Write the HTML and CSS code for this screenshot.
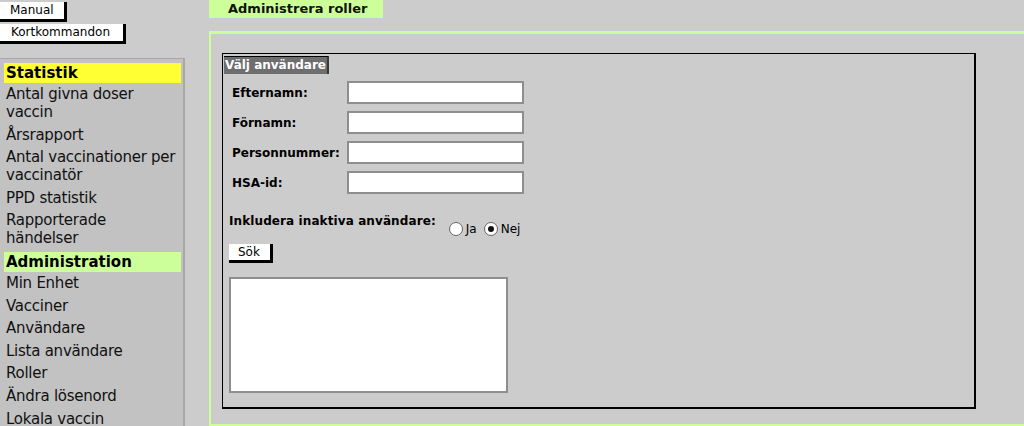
FILE: index.html
```html
<!DOCTYPE html>
<html lang="sv">
<head>
    <meta charset="UTF-8">
    <title>Administrera roller</title>
    <link rel="stylesheet" href="styles.css">
</head>
<body>
    <div class="sidebar">
        <div class="toplinks">
            <a class="btn" href="#">Manual</a>
            <a class="btn wide" href="#">Kortkommandon</a>
        </div>

        <!-- Meny -->
        <div class="menu">
            <div class="menu-head stat">Statistik</div>
            <a class="menu-item" href="#">Antal givna doser vaccin</a>
            <a class="menu-item" href="#">Årsrapport</a>
            <a class="menu-item" href="#">Antal vaccinationer per vaccinatör</a>
            <a class="menu-item" href="#">PPD statistik</a>
            <a class="menu-item" href="#">Rapporterade händelser</a>
            <div class="menu-head admin">Administration</div>
            <a class="menu-item" href="#">Min Enhet</a>
            <a class="menu-item" href="#">Vacciner</a>
            <a class="menu-item" href="#">Användare</a>
            <a class="menu-item" href="#">Lista användare</a>
            <a class="menu-item" href="#">Roller</a>
            <a class="menu-item" href="#">Ändra lösenord</a>
            <a class="menu-item" href="#">Lokala vaccin</a>
        </div>
    </div>

    <div class="main">
        <div class="tab">Administrera roller</div>
        <div class="content">
            <div class="box">
                <div class="legend">Välj användare</div>
                <form class="search">
                    <div class="row">
                        <label for="efternamn">Efternamn:</label>
                        <input type="text" id="efternamn">
                    </div>
                    <div class="row">
                        <label for="fornamn">Förnamn:</label>
                        <input type="text" id="fornamn">
                    </div>
                    <div class="row">
                        <label for="pnr">Personnummer:</label>
                        <input type="text" id="pnr">
                    </div>
                    <div class="row">
                        <label for="hsa">HSA-id:</label>
                        <input type="text" id="hsa">
                    </div>

                    <div class="inactive">
                        <span class="inactive-label">Inkludera inaktiva användare:</span>
                        <label class="radio"><span class="dot"></span>Ja</label>
                        <label class="radio"><span class="dot checked"></span>Nej</label>
                    </div>

                    <button type="button" class="btn sok">Sök</button>

                    <div class="listbox"></div>
                </form>
            </div>
        </div>
    </div>
</body>
</html>
```

FILE: styles.css
```css
body {
    margin: 0;
    height: 426px;
    overflow: hidden;
    background-color: #cccccc;
    font-family: "DejaVu Sans", Verdana, sans-serif;
    color: #000;
    display: flex;
}

/* vänsterspalt */
.sidebar {
    width: 185px;
    flex-shrink: 0;
    display: flex;
    flex-direction: column;
}

.toplinks {
    padding-top: 2px;
}

.btn {
    display: table;
    background-color: #fff;
    color: #000;
    text-decoration: none;
    font-size: 12px;
    line-height: 17px;
    padding: 0 10px 0 10px;
    border: none;
    border-right: 3px solid #000;
    border-bottom: 3px solid #000;
    margin-bottom: 2px;
}

.btn.wide {
    padding: 0 13px 0 11px;
}

.menu {
    margin-top: 12px;
    flex: 1;
    background-color: #c2c2c2;
    border-top: 1px solid #a8a8a8;
    border-right: 2px solid #a8a8a8;
    padding: 4px 2px 0 4px;
}

.menu-head {
    font-weight: bold;
    font-size: 15px;
    line-height: 20px;
    padding-left: 2px;
}

.menu-head.stat {
    background-color: #ffff33;
}

.menu-head.admin {
    background-color: #ccff99;
    margin-top: 2px;
}

.menu-item {
    display: block;
    color: #111;
    text-decoration: none;
    font-size: 15px;
    letter-spacing: -0.25px;
    line-height: 18px;
    padding: 2px 0 2.6px 2px;
}

/* huvuddel */
.main {
    flex: 1;
    margin-left: 24px;
    display: flex;
    flex-direction: column;
}

.tab {
    align-self: flex-start;
    width: 155px;
    background-color: #ccff99;
    font-size: 13px;
    font-weight: bold;
    line-height: 18px;
    padding-left: 19px;
    color: #111;
}

.content {
    margin-top: 13px;
    height: 385px;
    border-top: 3px solid #ccff99;
    border-left: 2px solid #ccff99;
    border-bottom: 2px solid #ccff99;
    padding: 19px 0 0 11px;
}

.box {
    width: 751px;
    height: 353px;
    border: 1px solid #000;
    border-right-width: 2px;
    border-bottom-width: 2px;
}

.legend {
    display: inline-block;
    margin: -1px 0 0 1px;
    background-color: #6e6e6e;
    color: #fff;
    font-size: 12px;
    font-weight: bold;
    line-height: 17px;
    padding: 0 1px;
    border-top: 1px solid #000;
    border-right: 2px solid #3a3a3a;
}

.search {
    padding: 7px 0 0 6px;
}

.row {
    display: flex;
    align-items: center;
    height: 23px;
    margin-bottom: 7px;
}

.row label {
    width: 115px;
    padding-left: 3px;
    font-size: 12px;
    font-weight: bold;
}

.row input {
    width: 173px;
    height: 19px;
    padding: 0;
    border: 2px solid #8e8e8e;
    background-color: #fff;
}

.inactive {
    display: flex;
    align-items: flex-end;
    margin-top: 20px;
    height: 23px;
}

.inactive-label {
    font-size: 12px;
    font-weight: bold;
    letter-spacing: 0.1px;
    align-self: flex-start;
    margin-right: 13px;
}

.radio {
    display: flex;
    align-items: center;
    font-size: 12px;
    margin-right: 7px;
    padding-bottom: 1px;
}

.dot {
    width: 12px;
    height: 12px;
    border-radius: 50%;
    border: 1px solid #666;
    background-color: #fff;
    margin-right: 3px;
    position: relative;
}

.dot.checked::after {
    content: "";
    position: absolute;
    left: 3px;
    top: 3px;
    width: 6px;
    height: 6px;
    border-radius: 50%;
    background-color: #111;
}

.sok {
    margin-top: 7px;
    font-family: "DejaVu Sans", Verdana, sans-serif;
    font-size: 12px;
    line-height: 16px;
    padding: 0 10px 0 9px;
}

.listbox {
    margin-top: 14px;
    width: 275px;
    height: 112px;
    background-color: #fff;
    border: 2px solid #8e8e8e;
}
```
